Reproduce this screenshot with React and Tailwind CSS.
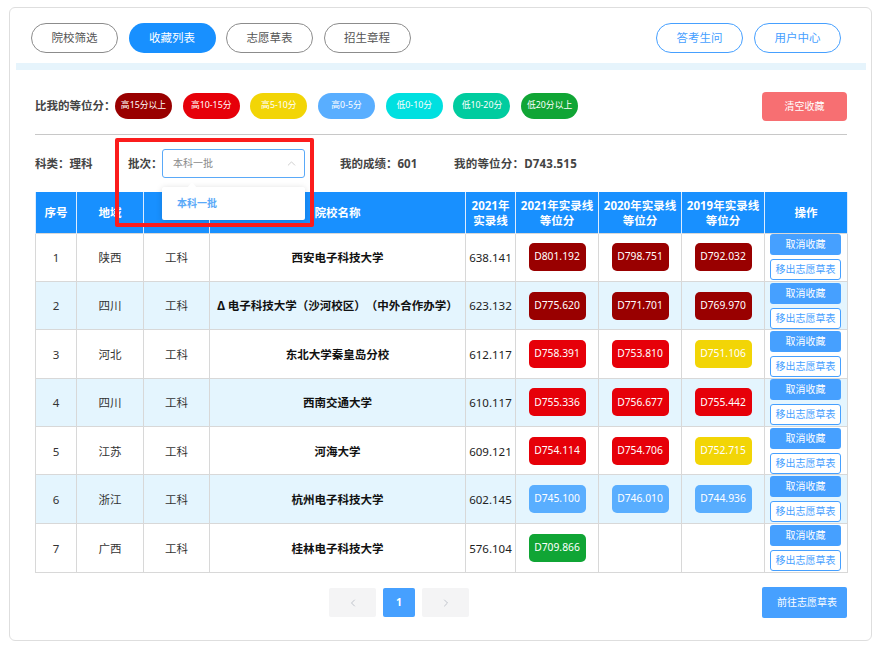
import React from "react";
import { ChevronUp, ChevronLeft, ChevronRight } from "lucide-react";

const tabs = ["院校筛选", "收藏列表", "志愿草表", "招生章程"];

const legend = [
  { label: "高15分以上", cls: "bg-[#990000]" },
  { label: "高10-15分", cls: "bg-[#e60009]" },
  { label: "高5-10分", cls: "bg-[#f2d506]" },
  { label: "高0-5分", cls: "bg-[#59aeff]" },
  { label: "低0-10分", cls: "bg-[#00e0e0]" },
  { label: "低10-20分", cls: "bg-[#00cc9f]" },
  { label: "低20分以上", cls: "bg-[#10a535]" },
];

const dark = "bg-[#990000]";
const red = "bg-[#e60009]";
const yellow = "bg-[#f2d506]";
const blue = "bg-[#59aeff]";
const green = "bg-[#10a535]";

const rows = [
  { no: 1, area: "陕西", name: "西安电子科技大学", line: "638.141", scores: [["D801.192", dark], ["D798.751", dark], ["D792.032", dark]] },
  { no: 2, area: "四川", name: "Δ 电子科技大学（沙河校区）（中外合作办学）", line: "623.132", scores: [["D775.620", dark], ["D771.701", dark], ["D769.970", dark]] },
  { no: 3, area: "河北", name: "东北大学秦皇岛分校", line: "612.117", scores: [["D758.391", red], ["D753.810", red], ["D751.106", yellow]] },
  { no: 4, area: "四川", name: "西南交通大学", line: "610.117", scores: [["D755.336", red], ["D756.677", red], ["D755.442", red]] },
  { no: 5, area: "江苏", name: "河海大学", line: "609.121", scores: [["D754.114", red], ["D754.706", red], ["D752.715", yellow]] },
  { no: 6, area: "浙江", name: "杭州电子科技大学", line: "602.145", scores: [["D745.100", blue], ["D746.010", blue], ["D744.936", blue]] },
  { no: 7, area: "广西", name: "桂林电子科技大学", line: "576.104", scores: [["D709.866", green]] },
];

const td = "border border-[#d8d8d8] p-0 text-center";
const tdText = "border border-[#d8d8d8] p-0 pt-[1px] text-center";
const th = "border border-[#dcecff] border-t-0 border-b-0 p-0 pt-[1px] text-center font-bold leading-[15px]";

export default function App() {
  return (
    <div className="h-[653px] w-[877px] overflow-hidden bg-white pl-[9px] pt-[7px] text-[11.5px] text-[#333] [font-family:'Noto_Sans','Noto_Sans_CJK_SC',sans-serif]">
      <div className="h-[634px] w-[863px] rounded-md border border-[#dedede] pt-[15px]">
        {/* TOP BAR */}
        <div className="flex h-[30px] items-center justify-between pl-[21px] pr-[30px]">
          <div className="flex gap-[10.5px]">
            {tabs.map((t, i) => (
              <div
                key={t}
                className={
                  i === 1
                    ? "flex h-[30px] w-[87px] items-center justify-center rounded-full bg-[#1890ff] text-white"
                    : "flex h-[30px] w-[87px] items-center justify-center rounded-full border border-[#8c8c8c] text-[#555]"
                }
              >
                {t}
              </div>
            ))}
          </div>
          <div className="flex gap-[11px]">
            <div className="flex h-[30px] w-[87px] items-center justify-center rounded-full border border-[#46a0ff] text-[#46a0ff]">
              答考生问
            </div>
            <div className="flex h-[30px] w-[87px] items-center justify-center rounded-full border border-[#46a0ff] text-[#46a0ff]">
              用户中心
            </div>
          </div>
        </div>

        <div className="ml-[6px] mt-[10px] h-[7px] w-[850px] bg-[#e6f4fc]" />

        <div className="ml-[25px] mr-[24px] mt-[21px]">
          {/* LEGEND */}
          <div className="flex h-[30px] items-center">
            <span className="w-[80px] whitespace-nowrap font-bold text-[#444]">比我的等位分：</span>
            <div className="flex gap-[10.7px]">
              {legend.map((l) => (
                <div
                  key={l.label}
                  className={`flex h-[26px] w-[57px] items-center justify-center whitespace-nowrap rounded-full text-[8.8px] text-white ${l.cls}`}
                >
                  {l.label}
                </div>
              ))}
            </div>
            <div className="ml-auto flex h-[29px] w-[85px] items-center justify-center rounded-sm bg-[#f76f72] text-[10px] text-white">
              清空收藏
            </div>
          </div>

          <div className="mt-[13px] h-px bg-[#c8c8c8]" />

          {/* FILTER ROW */}
          <div className="relative flex h-[57px] items-center whitespace-nowrap font-bold text-[#444]">
            <span className="w-[93px]">科类：理科</span>
            <span className="w-[34px]">批次：</span>
            <div className="flex h-[29px] w-[143px] items-center justify-between rounded-[3px] border border-[#5aa9f8] pl-[10px] pr-[6px] text-[10px] font-normal text-[#888]">
              本科一批
              <ChevronUp className="h-[13px] w-[13px] text-[#c4c4c4]" strokeWidth={1.5} />
            </div>
            <span className="ml-[35px] w-[114px]">我的成绩：601</span>
            <span className="tracking-[0.2px]">我的等位分：D743.515</span>

            {/* dropdown open */}
            <div className="absolute left-[127px] top-[52px] z-10 flex h-[33px] w-[143px] items-center rounded-[2px] bg-white pl-[15px] text-[10px] font-bold text-[#5aa9f8] shadow-[0_1px_6px_rgba(0,0,0,0.15)]">
              本科一批
            </div>
            <div className="absolute left-[152px] top-[47px] z-10 h-[6px] w-[10px] bg-white [clip-path:polygon(50%_0,100%_100%,0_100%)]" />
            {/* red annotation box */}
            <div className="absolute left-[80px] top-[3px] z-20 h-[89px] w-[199px] rounded-[2px] border-[4px] border-[#fb1c1c]" />
          </div>

          {/* TABLE */}
          <table className="w-[812px] table-fixed border-collapse">
            <colgroup>
              <col className="w-[41px]" />
              <col className="w-[67px]" />
              <col className="w-[66px]" />
              <col className="w-[256px]" />
              <col className="w-[50px]" />
              <col className="w-[83px]" />
              <col className="w-[83px]" />
              <col className="w-[83px]" />
              <col className="w-[83px]" />
            </colgroup>
            <thead>
              <tr className="h-[41px] bg-[#1890ff] text-white">
                <th className={th}>序号</th>
                <th className={th}>地域</th>
                <th className={th}>类别</th>
                <th className={th}>院校名称</th>
                <th className={th}>2021年<br />实录线</th>
                <th className={th}>2021年实录线<br />等位分</th>
                <th className={th}>2020年实录线<br />等位分</th>
                <th className={th}>2019年实录线<br />等位分</th>
                <th className={th}>操作</th>
              </tr>
            </thead>
            <tbody>
              {rows.map((r) => (
                <tr
                  key={r.no}
                  className={r.no === 7 ? "h-[49.4px] bg-white" : r.no % 2 === 0 ? "h-[48.4px] bg-[#e4f5fe]" : "h-[48.4px] bg-white"}
                >
                  <td className={tdText}>{r.no}</td>
                  <td className={tdText}>{r.area}</td>
                  <td className={tdText}>工科</td>
                  <td className={`${tdText} font-bold text-[#111] [text-spacing-trim:space-all]`}>{r.name}</td>
                  <td className={`${tdText} text-[#222]`}>{r.line}</td>
                  {[0, 1, 2].map((i) => (
                    <td key={i} className={td}>
                      {r.scores[i] && (
                        <div className={`mx-auto flex h-[28px] w-[57px] items-center justify-center rounded-[5px] text-[10.3px] text-white ${r.scores[i][1]}`}>
                          {r.scores[i][0]}
                        </div>
                      )}
                    </td>
                  ))}
                  <td className={td}>
                    <div className="ml-[5px] flex w-[71px] flex-col gap-[4px]">
                      <div className="flex h-[21px] items-center justify-center rounded-[3px] bg-[#46a0ff] text-[10px] text-white">
                        取消收藏
                      </div>
                      <div className="flex h-[21px] items-center justify-center rounded-[3px] border border-[#46a0ff] bg-white text-[10px] text-[#46a0ff]">
                        移出志愿草表
                      </div>
                    </div>
                  </td>
                </tr>
              ))}
            </tbody>
          </table>

          {/* PAGINATION */}
          <div className="relative mt-[14px] flex h-[31px] items-start justify-center pr-[84px] pt-[1px]">
            <div className="flex h-[29px] gap-[7px]">
              <div className="flex w-[47px] items-center justify-center rounded-[2px] bg-[#f4f4f5] text-[#c0c4cc]">
                <ChevronLeft className="h-[12px] w-[12px]" strokeWidth={2} />
              </div>
              <div className="flex w-[32px] items-center justify-center rounded-[2px] bg-[#46a0ff] text-[10.5px] font-bold text-white">1</div>
              <div className="flex w-[47px] items-center justify-center rounded-[2px] bg-[#f4f4f5] text-[#c0c4cc]">
                <ChevronRight className="h-[12px] w-[12px]" strokeWidth={2} />
              </div>
            </div>
            <div className="absolute right-0 top-0 flex h-[31px] w-[85px] items-center justify-center rounded-[2px] bg-[#46a0ff] pl-[5px] text-[10px] text-white">
              前往志愿草表
            </div>
          </div>
        </div>
      </div>
    </div>
  );
}
